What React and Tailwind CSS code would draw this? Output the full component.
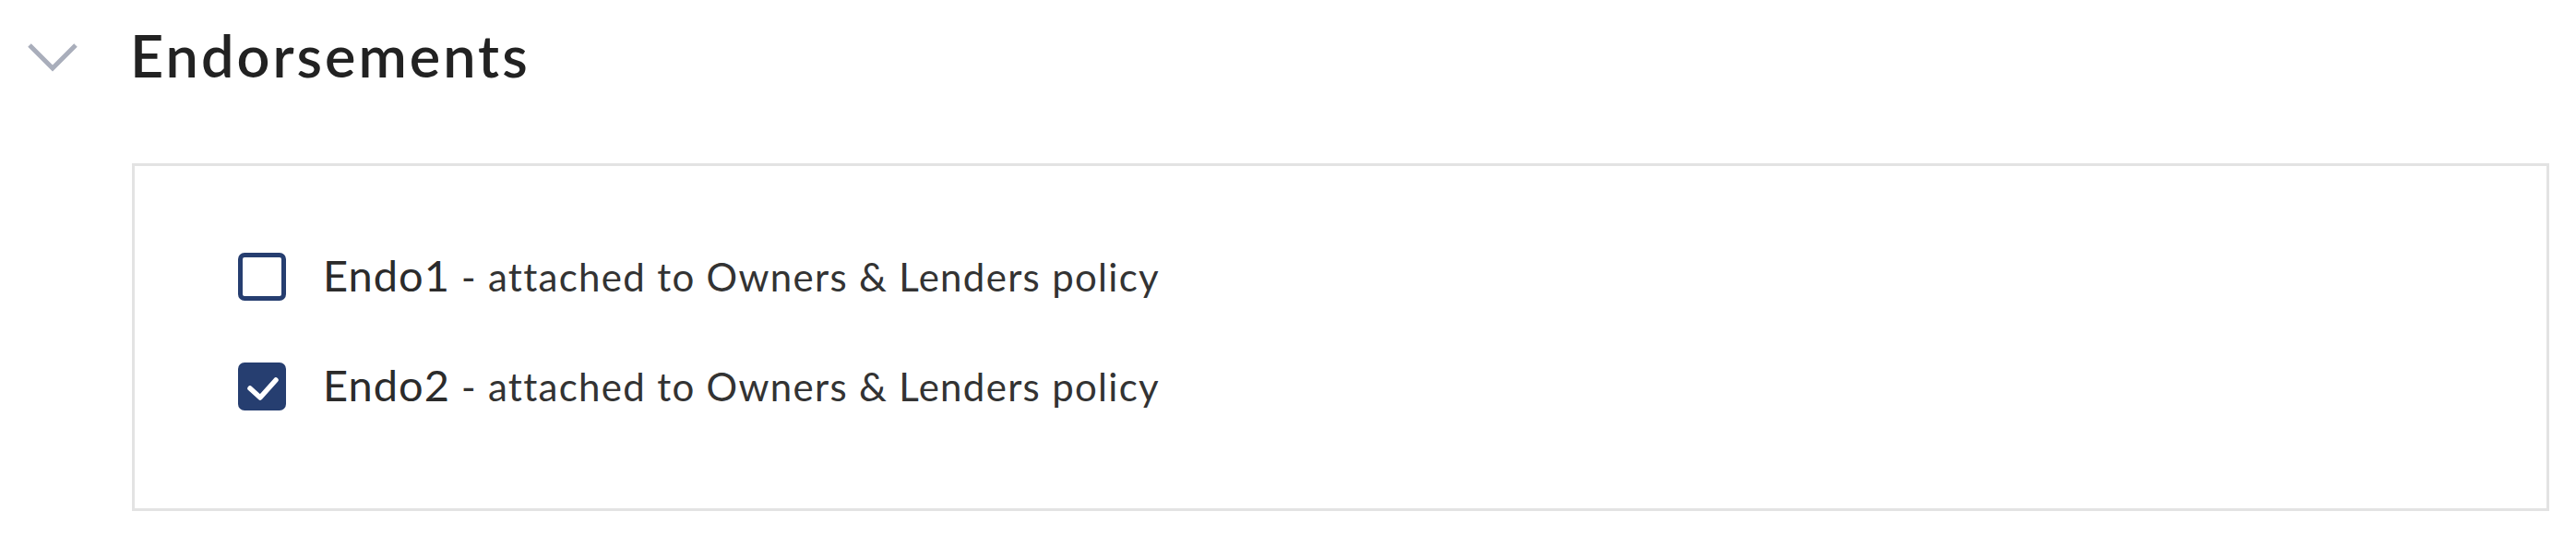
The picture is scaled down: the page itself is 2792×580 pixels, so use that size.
import React, { useState } from 'react'

const endorsements = [
  { id: 'endo1', name: 'Endo1', note: 'attached to Owners & Lenders policy', checked: false },
  { id: 'endo2', name: 'Endo2', note: 'attached to Owners & Lenders policy', checked: true }
]

const Checkbox = ({ checked, onChange }) => (
  <button
    type="button"
    onClick={onChange}
    className={
      checked
        ? 'w-[52px] h-[52px] shrink-0 rounded-[7px] bg-[#263e70] border-[5px] border-[#263e70] flex items-center justify-center'
        : 'w-[52px] h-[52px] shrink-0 rounded-[7px] bg-white border-[5px] border-[#263e70]'
    }
  >
    {checked && (
      <svg width="42" height="42" viewBox="0 0 42 42">
        <polyline points="8,23 19,33 36,14" fill="none" stroke="#fff" strokeWidth="5.5" strokeLinecap="round" strokeLinejoin="round" />
      </svg>
    )}
  </button>
)

export default function App() {
  const [items, setItems] = useState(endorsements)

  const toggle = (id) => {
    setItems(items.map(item => (item.id === id ? { ...item, checked: !item.checked } : item)))
  }

  return (
    <div className="w-[2792px] h-[580px] bg-white font-['Lato',sans-serif] overflow-hidden">
      {/* Section header */}
      <div className="flex items-center pt-[28px]">
        <div className="w-[141px] pl-[29px] mt-[4px]">
          <svg width="56" height="32" viewBox="0 0 56 32">
            <polyline points="3,3 28,28 53,3" fill="none" stroke="#a9aebb" strokeWidth="5" />
          </svg>
        </div>
        <h2 className="text-[63px] leading-none font-semibold text-[#222222] tracking-[3px]">Endorsements</h2>
      </div>

      {/* Endorsement list */}
      <div className="ml-[143px] mt-[86px] w-[2620px] h-[377px] border-[3px] border-[#e3e3e3] pl-[112px] pt-[94px] flex flex-col gap-[67px]">
        {items.map(item => (
          <label key={item.id} className="flex items-center gap-[40px] cursor-pointer">
            <Checkbox checked={item.checked} onChange={() => toggle(item.id)} />
            <span className="leading-none text-[#2b2b2b] -mt-[4px]">
              <span className="text-[47px] tracking-[1px]">{item.name}</span>
              <span className="text-[42px] tracking-[1.3px] text-[#333333]"> - {item.note}</span>
            </span>
          </label>
        ))}
      </div>
    </div>
  )
}
